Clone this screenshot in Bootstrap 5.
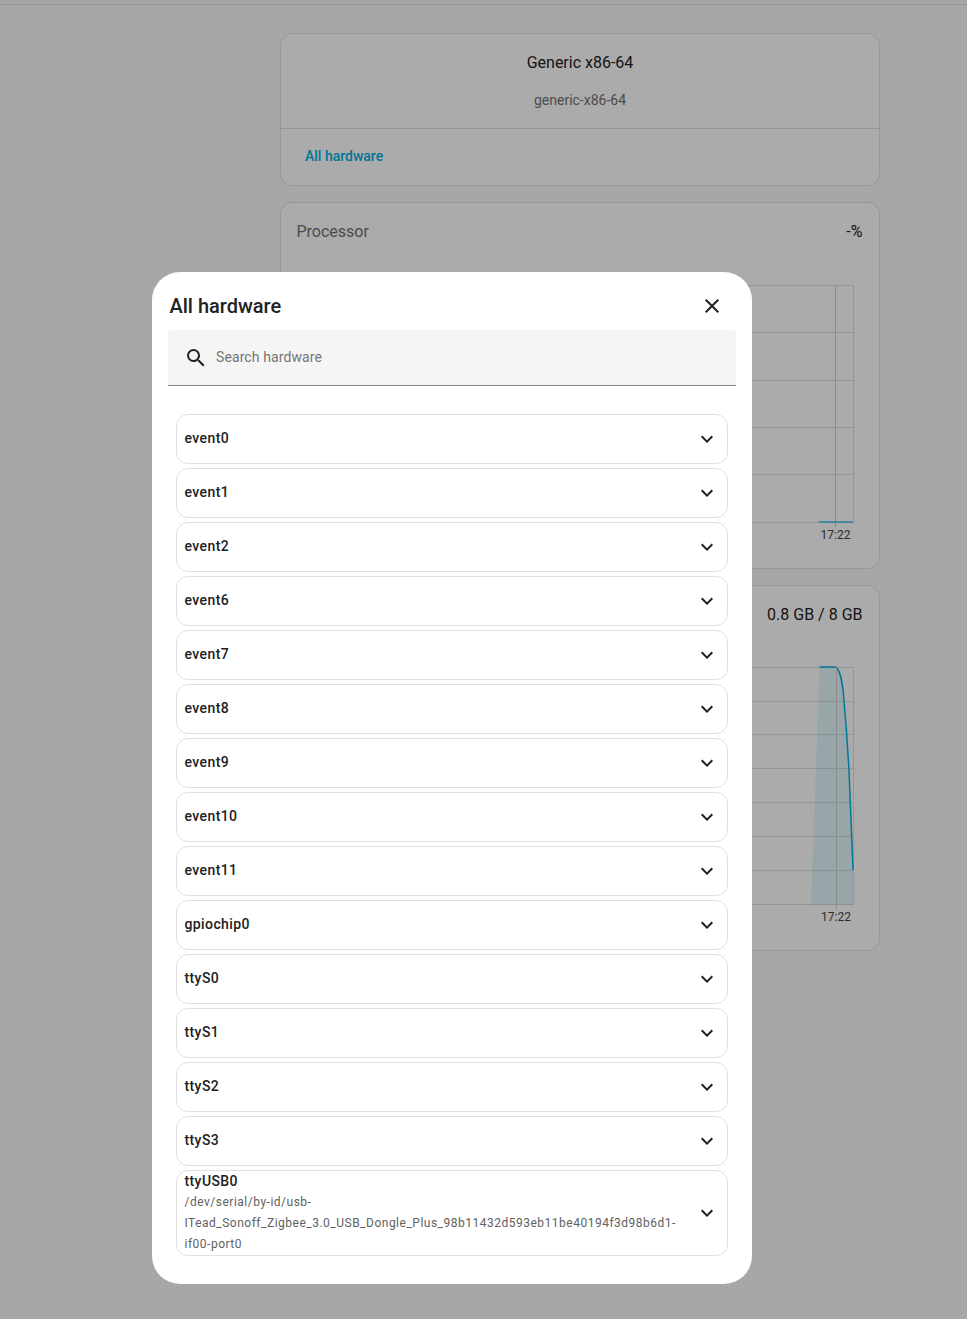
<!DOCTYPE html>
<html lang="en">
<head>
  <meta charset="UTF-8" />
  <meta name="viewport" content="width=device-width, initial-scale=1.0" />
  <title>All hardware</title>
  <link href="https://cdn.jsdelivr.net/npm/bootstrap@5.3.0/dist/css/bootstrap.min.css" rel="stylesheet" />
  <style>
    body { background: #fafafa; font-family: Roboto, "Liberation Sans", sans-serif; color: #212121; height: 1319px; overflow: hidden; }
    .topline { height: 5px; border-bottom: 1px solid #e0e0e0; }
    .page-col { width: 600px; margin-left: 280px; padding-top: 28px; }
    .hw-card { border: 1px solid #e0e0e0; border-radius: 12px; background: #fff; margin-bottom: 16px; }
    .board-top { height: 95px; padding-top: 17px; border-bottom: 1px solid #e0e0e0; }
    .board-name { font-size: 16px; line-height: 24px; }
    .board-id { font-size: 14px; line-height: 20px; color: #727272; margin-top: 15px; }
    .board-link { height: 56px; padding: 0 24px 2px; font-size: 14px; font-weight: 500; color: #00b0e0; }
    .chart-head { height: 55px; padding: 17px 16.5px 0 15.5px; font-size: 16px; line-height: 24px; }
    .chart-title { color: #727272; }
    .chart-box { display: block; width: 598px; }
    .chart-box text { font-size: 12px; fill: #444; text-anchor: middle; }
    .scrim { background: rgba(0,0,0,.33); padding: 272px 0 0 152px; }
    .hw-dialog { width: 600px; height: 1012px; background: #fff; border-radius: 28px; }
    .dlg-head { height: 58px; padding: 10px 20px 0 17.5px; }
    .dlg-title { font-size: 20px; font-weight: 500; line-height: 24px; margin: 0; }
    .dlg-close { width: 40px; height: 40px; padding: 8px; border: 0; background: none; line-height: 0; }
    .hw-search { height: 56px; margin: 0 16px; padding: 0 16px; background: #f5f5f5; border-bottom: 1px solid #8a8a8a; border-radius: 4px 4px 0 0; gap: 6px; }
    .hw-search input { border: 0; background: none; outline: 0; font-size: 14px; letter-spacing: .1px; flex: 1; color: #212121; }
    .hw-search input::placeholder { color: #757575; opacity: 1; }
    .hw-list { margin: 28px 24px 0; gap: 4px; }
    .hw-row { min-height: 50px; padding: 0 8px 0 7.5px; border: 1px solid #e0e0e0; border-radius: 12px; }
    .hw-name { font-size: 14px; font-weight: 500; line-height: 21px; letter-spacing: .4px; }
    .hw-row > .hw-name { margin-bottom: 2px; }
    .hw-path { font-size: 12px; line-height: 21px; letter-spacing: .5px; color: #616161; }
    .hw-text { width: 495px; }
    .ico { width: 24px; height: 24px; fill: #212121; flex: none; }
  </style>
</head>
<body>
  <div class="topline"></div>

  <main class="page-col">
    <section class="hw-card">
      <div class="board-top text-center">
        <div class="board-name">Generic x86-64</div>
        <div class="board-id">generic-x86-64</div>
      </div>
      <div class="board-link d-flex align-items-center">All hardware</div>
    </section>

    <section class="hw-card">
      <div class="chart-head d-flex justify-content-between">
        <span class="chart-title">Processor</span>
        <span>-%</span>
      </div>
      <svg class="chart-box" height="310" viewBox="0 0 598 310">
        <g stroke="#e0e0e0" fill="none">
          <path d="M50 27.5H572.5M50 74.5H572.5M50 122.5H572.5M50 169.5H572.5M50 216.5H572.5M50 264.5H572.5M572.5 27V265" />
          <path d="M554.5 27V269" stroke="#d0d0d0" />
        </g>
        <path d="M538 264H572" stroke="#00b4e6" stroke-width="1.5" stroke-opacity=".75" fill="none" />
        <text x="554.5" y="281">17:22</text>
      </svg>
    </section>

    <section class="hw-card">
      <div class="chart-head d-flex justify-content-between">
        <span class="chart-title">Memory</span>
        <span>0.8 GB / 8 GB</span>
      </div>
      <svg class="chart-box" height="309" viewBox="0 0 598 309">
        <g stroke="#e0e0e0" fill="none">
          <path d="M50 26.5H572.5M50 60.5H572.5M50 93.5H572.5M50 127.5H572.5M50 161.5H572.5M50 195.5H572.5M50 229.5H572.5M50 263.5H572.5M572.5 26V264" />
        </g>
        <path d="M530 264L538.5 26H555C559 29 562 44 563 60C565 82 567 110 568 130L572 229V264Z" fill="#00b4e6" fill-opacity=".11" />
        <path d="M538.5 26H555C559 29 562 44 563 60C565 82 567 110 568 130L572 229" stroke="#00b4e6" stroke-width="1.5" fill="none" />
        <path d="M555.5 26V268" stroke="#d0d0d0" fill="none" />
        <text x="555" y="280">17:22</text>
      </svg>
    </section>
  </main>

  <div class="scrim position-fixed top-0 start-0 w-100 h-100">
    <div class="hw-dialog d-flex flex-column">
      <header class="dlg-head d-flex align-items-center justify-content-between">
        <h2 class="dlg-title">All hardware</h2>
        <button class="dlg-close" type="button" aria-label="Close">
          <svg class="ico" viewBox="0 0 24 24"><path d="M19,6.41L17.59,5L12,10.59L6.41,5L5,6.41L10.59,12L5,17.59L6.41,19L12,13.41L17.59,19L19,17.59L13.41,12L19,6.41Z" /></svg>
        </button>
      </header>
      <div class="hw-search d-flex align-items-center">
        <svg class="ico" viewBox="0 0 24 24"><path d="M9.5,3A6.5,6.5 0 0,1 16,9.5C16,11.11 15.41,12.59 14.44,13.73L14.71,14H15.5L20.5,19L19,20.5L14,15.5V14.71L13.73,14.44C12.59,15.41 11.11,16 9.5,16A6.5,6.5 0 0,1 3,9.5A6.5,6.5 0 0,1 9.5,3M9.5,5C7,5 5,7 5,9.5C5,12 7,14 9.5,14C12,14 14,12 14,9.5C14,7 12,5 9.5,5Z" /></svg>
        <input type="text" placeholder="Search hardware" />
      </div>
      <div id="hwList" class="hw-list d-flex flex-column"></div>
    </div>
  </div>

  <script src="https://cdn.jsdelivr.net/npm/bootstrap@5.3.0/dist/js/bootstrap.bundle.min.js"></script>
  <script>
    const chevron = '<svg class="ico" viewBox="0 0 24 24"><path d="M7.41,8.58L12,13.17L16.59,8.58L18,10L12,16L6,10L7.41,8.58Z" /></svg>';
    const devices = ['event0', 'event1', 'event2', 'event6', 'event7', 'event8', 'event9', 'event10', 'event11', 'gpiochip0', 'ttyS0', 'ttyS1', 'ttyS2', 'ttyS3'];
    let html = devices.map(name => `
      <div class="hw-row d-flex align-items-center justify-content-between">
        <div class="hw-name">${name}</div>${chevron}
      </div>`).join('');
    html += `
      <div class="hw-row d-flex align-items-center justify-content-between">
        <div class="hw-text">
          <div class="hw-name">ttyUSB0</div>
          <div class="hw-path">/dev/serial/by-id/usb-ITead_Sonoff_Zigbee_3.0_USB_Dongle_Plus_98b11432d593eb11be40194f3d98b6d1-if00-port0</div>
        </div>${chevron}
      </div>`;
    document.getElementById('hwList').innerHTML = html;
  </script>
</body>
</html>
